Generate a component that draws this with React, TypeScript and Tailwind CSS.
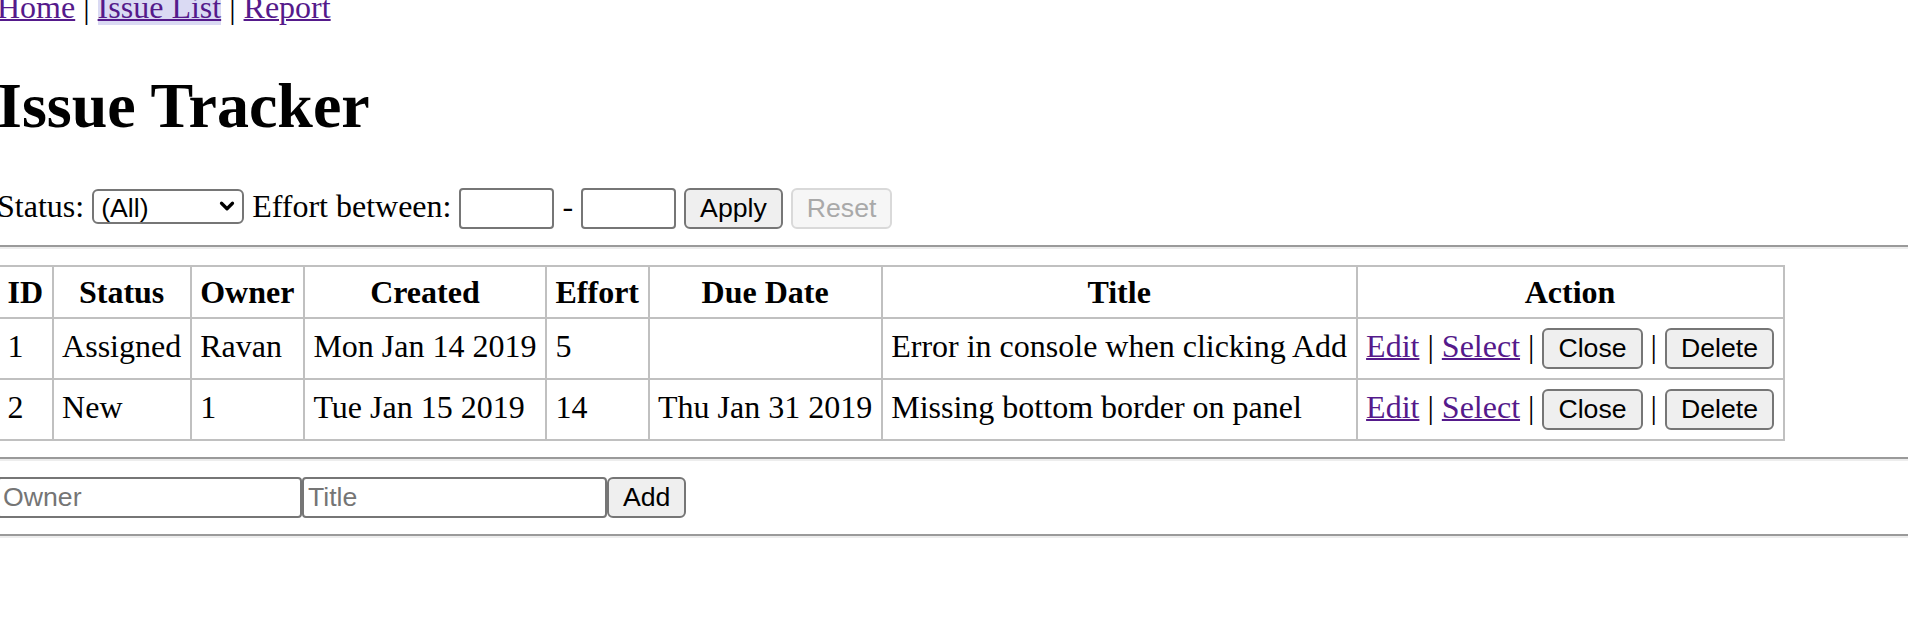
import { ChevronDown } from 'lucide-react';

const issues = [
  {
    id: 1,
    status: 'Assigned',
    owner: 'Ravan',
    created: 'Mon Jan 14 2019',
    effort: 5,
    due: '',
    title: 'Error in console when clicking Add',
  },
  {
    id: 2,
    status: 'New',
    owner: '1',
    created: 'Tue Jan 15 2019',
    effort: 14,
    due: 'Thu Jan 31 2019',
    title: 'Missing bottom border on panel',
  },
];

const headers = ['ID', 'Status', 'Owner', 'Created', 'Effort', 'Due Date', 'Title', 'Action'];

const link = 'text-[#551a8b] underline decoration-2';
const control = "font-['Liberation_Sans',Arial,sans-serif] text-[26.67px] text-black";
const btnBase =
  "inline-block h-[41px] px-[14px] border-2 rounded-[6px] leading-[37px] align-baseline font-['Liberation_Sans',Arial,sans-serif] text-[26.67px]";
const btn = `${btnBase} border-[#767676] bg-[#efefef] text-black`;
const btnDisabled = `${btnBase} border-[#d9d9d9] bg-[#f6f6f6] text-[#a9a9a9]`;
const field =
  "inline-block h-[41px] border-2 border-[#767676] rounded-[4px] bg-white px-[4px] align-baseline font-['Liberation_Sans',Arial,sans-serif] text-[26.67px] text-black placeholder:text-[#757575]";
const rule = 'my-4 h-0 border-t-2 border-b-2 border-t-[#9a9a9a] border-b-[#ededed]';
const cell = 'border-2 border-[#c0c0c0] px-[8.5px] py-[9px] align-baseline whitespace-nowrap';

function IssueFilter() {
  return (
    <div>
      Status:{' '}
      <span className="relative inline-block align-baseline">
        <select
          className={`appearance-none h-[35px] w-[152px] border-2 border-[#767676] rounded-[6px] bg-white pl-[7px] ${control}`}
          defaultValue=""
        >
          <option value="">(All)</option>
          <option value="New">New</option>
          <option value="Assigned">Assigned</option>
          <option value="Fixed">Fixed</option>
          <option value="Closed">Closed</option>
        </select>
        <ChevronDown
          size={22}
          strokeWidth={3.5}
          className="pointer-events-none absolute right-[6px] top-[6px] text-black"
        />
      </span>{' '}
      Effort between: <input className={`${field} w-[95px]`} /> - <input className={`${field} w-[95px]`} />{' '}
      <button className={btn}>Apply</button>{' '}
      <button disabled className={btnDisabled}>
        Reset
      </button>
    </div>
  );
}

function IssueTable() {
  return (
    <table className="border-collapse border-2 border-[#c0c0c0]">
      <thead>
        <tr>
          {headers.map((h) => (
            <th
              key={h}
              className="border-2 border-[#c0c0c0] px-[8.5px] py-2 leading-[34px] text-center font-bold align-baseline whitespace-nowrap"
            >
              {h}
            </th>
          ))}
        </tr>
      </thead>
      <tbody>
        {issues.map((issue) => (
          <tr key={issue.id}>
            <td className={cell}>{issue.id}</td>
            <td className={cell}>{issue.status}</td>
            <td className={cell}>{issue.owner}</td>
            <td className={cell}>{issue.created}</td>
            <td className={cell}>{issue.effort}</td>
            <td className={cell}>{issue.due}</td>
            <td className={cell}>{issue.title}</td>
            <td className={cell}>
              <a href="#" className={link}>Edit</a>
              {' | '}
              <a href="#" className={link}>Select</a>
              {' | '}
              <button className={btn}>Close</button>
              {' | '}
              <button className={btn}>Delete</button>
            </td>
          </tr>
        ))}
      </tbody>
    </table>
  );
}

function IssueAdd() {
  return (
    <form onSubmit={(e) => e.preventDefault()}>
      <input className={`${field} w-[305px]`} placeholder="Owner" />
      <input className={`${field} w-[305px]`} placeholder="Title" />
      <button className={btn}>Add</button>
    </form>
  );
}

export default function App() {
  return (
    <div className="min-h-screen bg-white overflow-hidden">
      <div className="-mt-[10px] -ml-[3px] font-['Liberation_Serif','Times_New_Roman',serif] text-[32px] leading-[35px] text-black">
        <nav>
          <a href="#" className={link}>Home</a>
          {' | '}
          <a href="#" className={`${link} bg-[#dadaf3]`}>Issue List</a>
          {' | '}
          <a href="#" className={link}>Report</a>
        </nav>

        <h1 className="mt-[43px] mb-[45px] text-[64px] leading-[75px] font-bold">Issue Tracker</h1>

        <IssueFilter />
        <hr className={rule} />
        <IssueTable />
        <hr className={rule} />
        <IssueAdd />
        <hr className={rule} />
      </div>
    </div>
  );
}
